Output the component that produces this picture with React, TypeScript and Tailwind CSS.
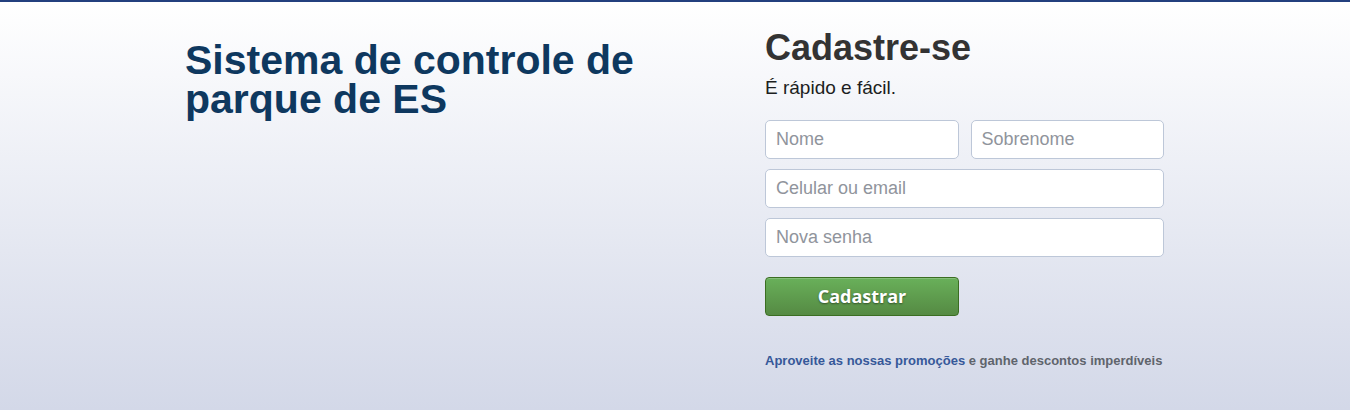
import React from "react";

const inputCls =
  "h-[39px] w-full rounded-[5px] border border-[#bdc7d8] bg-white px-[10px] text-[18px] text-[#1d2129] outline-none placeholder:text-[#90949c]";

export default function App() {
  return (
    <div
      className="h-[410px] w-full border-t-2 border-[#23407e] bg-gradient-to-b from-white to-[#d3d8e8]"
      style={{ fontFamily: '"Liberation Sans", Arial, Helvetica, sans-serif' }}
    >
      <div className="mx-auto flex w-[980px]">
        <div className="w-[580px] pr-[60px] pt-[39px]">
          <h1 className="text-[41px] font-bold leading-[39px] text-[#0e385f]">
            Sistema de controle de parque de ES
          </h1>
        </div>

        <div className="w-[399px] pt-[23px]">
          <h2 className="text-[36px] font-bold leading-[45px] text-[#333333]">
            Cadastre-se
          </h2>
          <p className="mt-[6px] text-[19px] leading-[24px] text-[#1c1e21]">
            É rápido e fácil.
          </p>

          <form className="mt-[20px] flex flex-col gap-[10px]" onSubmit={(e) => e.preventDefault()}>
            <div className="flex gap-[12px]">
              <input className={inputCls} placeholder="Nome" />
              <input className={inputCls} placeholder="Sobrenome" />
            </div>
            <input className={inputCls} placeholder="Celular ou email" />
            <input className={inputCls} type="password" placeholder="Nova senha" />

            <div className="mt-[10px]">
              <button
                type="submit"
                className="h-[39px] w-[194px] rounded-[4px] border border-[#3b6e22] bg-gradient-to-b from-[#69b05a] to-[#558a43] text-[18px] font-bold text-white [text-shadow:0_1px_2px_rgba(0,0,0,0.45)] shadow-[inset_0_1px_0_rgba(255,255,255,0.2)]"
                style={{ fontFamily: '"Open Sans", "Noto Sans", sans-serif' }}
              >
                Cadastrar
              </button>
            </div>
          </form>

          <p className="mt-[37px] text-[13px] font-bold leading-[16px] text-[#5f646c]">
            <a href="#" className="text-[#365899]">
              Aproveite as nossas promoções
            </a>{" "}
            e ganhe descontos imperdíveis
          </p>
        </div>
      </div>
    </div>
  );
}
